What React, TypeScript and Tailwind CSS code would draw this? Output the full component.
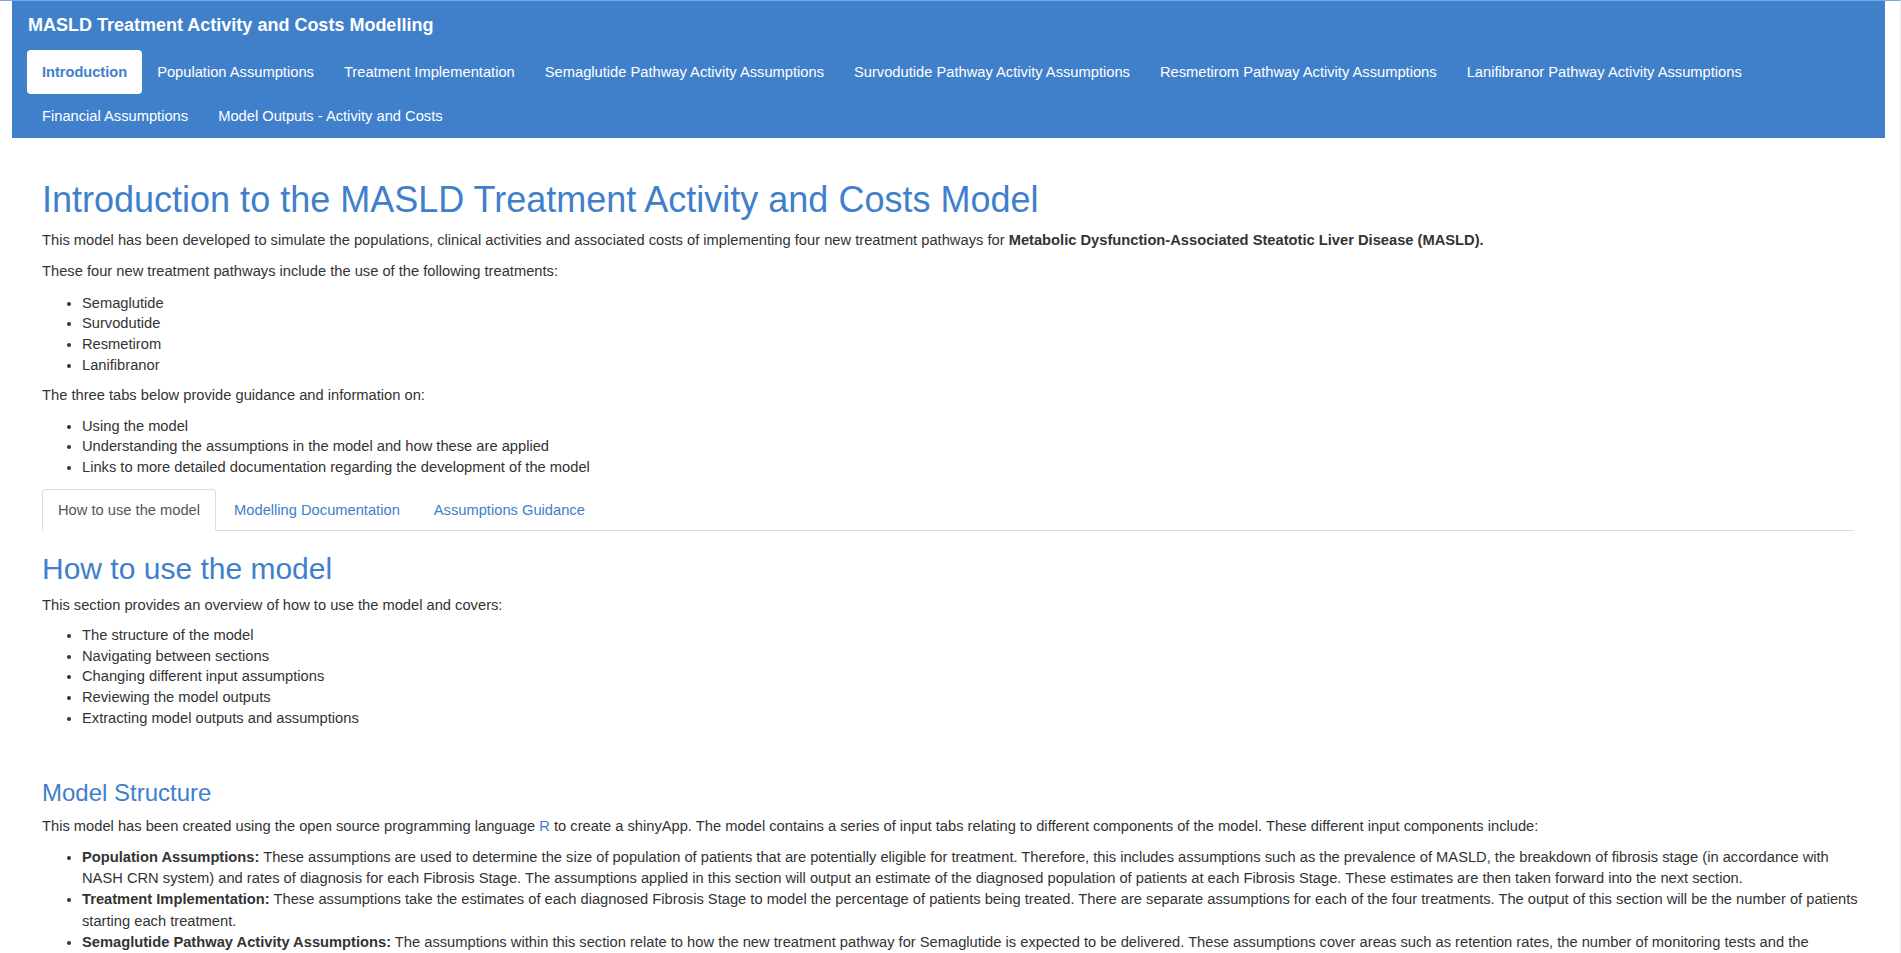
import React from "react";

const navItems = [
  "Introduction",
  "Population Assumptions",
  "Treatment Implementation",
  "Semaglutide Pathway Activity Assumptions",
  "Survodutide Pathway Activity Assumptions",
  "Resmetirom Pathway Activity Assumptions",
  "Lanifibranor Pathway Activity Assumptions",
  "Financial Assumptions",
  "Model Outputs - Activity and Costs",
];

export default function App() {
  return (
    <div className="min-h-screen bg-white border-t border-[#7ea7dd] border-r border-r-[#ececec] font-['Liberation_Sans',Arial,Helvetica,sans-serif] text-[#333] text-[14.7px] leading-[20.6px]">
      <nav className="ml-[12px] mr-[15px] bg-[#4080cb]">
        <div className="h-[49px] pt-[14px] pl-[16px] text-[18px] leading-[20px] font-bold text-white">
          MASLD Treatment Activity and Costs Modelling
        </div>
        <ul className="flex flex-wrap px-[15px]">
          {navItems.map((item, i) => (
            <li key={item}>
              {i === 0 ? (
                <span className="block h-[44px] px-[15px] py-[12px] leading-[20px] rounded-[4px] bg-white text-[#4080cb] font-bold text-[14.6px]">
                  {item}
                </span>
              ) : (
                <span className="block h-[44px] px-[15px] py-[12px] leading-[20px] text-white">
                  {item}
                </span>
              )}
            </li>
          ))}
        </ul>
      </nav>

      <main className="pl-[42px] pr-[46px]">
        <h1 className="mt-[42px] mb-[10px] text-[36px] leading-[1.1] text-[#4080cb]">
          Introduction to the MASLD Treatment Activity and Costs Model
        </h1>
        <p className="mb-[11px]">
          This model has been developed to simulate the populations, clinical activities and associated costs of
          implementing four new treatment pathways for{" "}
          <b className="font-bold">Metabolic Dysfunction-Associated Steatotic Liver Disease (MASLD).</b>
        </p>
        <p className="mb-[11px]">These four new treatment pathways include the use of the following treatments:</p>
        <ul className="mb-[10px] pl-[40px] list-disc">
          <li>Semaglutide</li>
          <li>Survodutide</li>
          <li>Resmetirom</li>
          <li>Lanifibranor</li>
        </ul>
        <p className="mb-[10px]">The three tabs below provide guidance and information on:</p>
        <ul className="mb-[11px] pl-[40px] list-disc">
          <li>Using the model</li>
          <li>Understanding the assumptions in the model and how these are applied</li>
          <li>Links to more detailed documentation regarding the development of the model</li>
        </ul>

        <ul className="flex border-b border-[#ddd]">
          <li className="-mb-px mr-[2px]">
            <span className="block px-[15px] py-[10px] leading-[20px] border border-[#ddd] border-b-transparent rounded-t-[4px] bg-white text-[#555]">
              How to use the model
            </span>
          </li>
          <li className="-mb-px mr-[2px]">
            <span className="block px-[15px] py-[10px] leading-[20px] border border-transparent text-[#4080cb]">
              Modelling Documentation
            </span>
          </li>
          <li className="-mb-px mr-[2px]">
            <span className="block px-[15px] py-[10px] leading-[20px] border border-transparent text-[#4080cb]">
              Assumptions Guidance
            </span>
          </li>
        </ul>

        <h2 className="mt-[21px] mb-[10px] text-[30px] leading-[1.1] text-[#4080cb]">How to use the model</h2>
        <p className="mb-[10px]">This section provides an overview of how to use the model and covers:</p>
        <ul className="mb-[10px] pl-[40px] list-disc">
          <li>The structure of the model</li>
          <li>Navigating between sections</li>
          <li>Changing different input assumptions</li>
          <li>Reviewing the model outputs</li>
          <li>Extracting model outputs and assumptions</li>
        </ul>

        <h3 className="mt-[52px] mb-[10px] text-[24px] leading-[1.1] text-[#4080cb]">Model Structure</h3>
        <p className="mb-[10px]">
          This model has been created using the open source programming language{" "}
          <span className="text-[#4080cb]">R</span> to create a shinyApp. The model contains a series of input tabs
          relating to different components of the model. These different input components include:
        </p>
        <ul className="mb-[10px] pl-[40px] list-disc -mr-[4px] leading-[21.2px]">
          <li>
            <b>Population Assumptions:</b> These assumptions are used to determine the size of population of patients
            that are potentially eligible for treatment. Therefore, this includes assumptions such as the prevalence of
            MASLD, the breakdown of fibrosis stage (in accordance with NASH CRN system) and rates of diagnosis for each
            Fibrosis Stage. The assumptions applied in this section will output an estimate of the diagnosed population
            of patients at each Fibrosis Stage. These estimates are then taken forward into the next section.
          </li>
          <li>
            <b>Treatment Implementation:</b> These assumptions take the estimates of each diagnosed Fibrosis Stage to
            model the percentage of patients being treated. There are separate assumptions for each of the four
            treatments. The output of this section will be the number of patients starting each treatment.
          </li>
          <li>
            <b>Semaglutide Pathway Activity Assumptions:</b> The assumptions within this section relate to how the new
            treatment pathway for Semaglutide is expected to be delivered. These assumptions cover areas such as
            retention rates, the number of monitoring tests and the frequency of follow-up appointments required for
            patients on treatment.
          </li>
          <li>
            <b>Survodutide Pathway Activity Assumptions:</b> The assumptions within this section relate to how the new
            treatment pathway for Survodutide is expected to be delivered.
          </li>
          <li>
            <b>Resmetirom Pathway Activity Assumptions:</b> The assumptions within this section relate to how the new
            treatment pathway for Resmetirom is expected to be delivered.
          </li>
        </ul>
      </main>
    </div>
  );
}
